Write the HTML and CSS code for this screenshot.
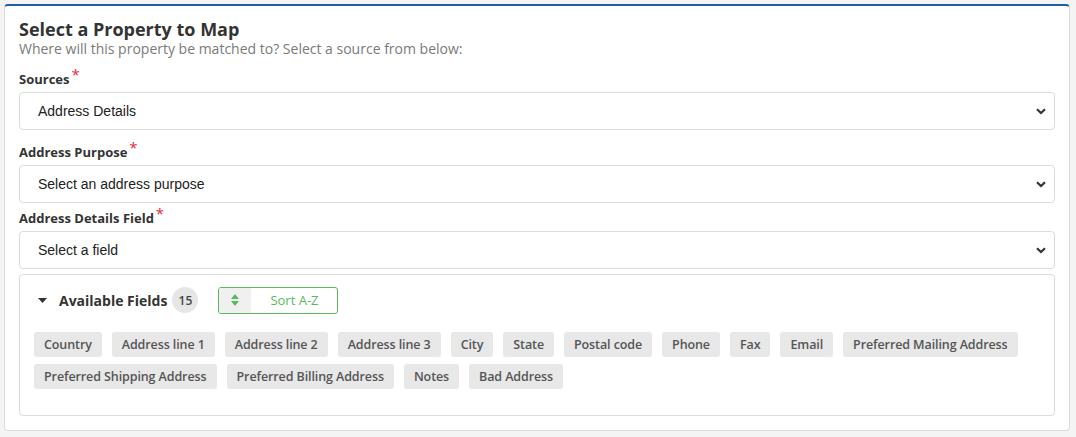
FILE: index.html
```html
<!DOCTYPE html>
<html>
<head>
<meta charset="utf-8">
<link rel="stylesheet" href="styles.css">
</head>
<body>
<div class="card">
  <h1 class="title">Select a Property to Map</h1>
  <p class="subtitle">Where will this property be matched to? Select a source from below:</p>

  <div class="field field-1">
    <label class="label">Sources<span class="req">*</span></label>
    <div class="select"><span>Address Details</span>
      <svg class="chev" width="10" height="7" viewBox="0 0 10 7"><path d="M1 1.2 L5 5 L9 1.2" fill="none" stroke="#333" stroke-width="2.2"/></svg>
    </div>
  </div>

  <div class="field field-2">
    <label class="label">Address Purpose<span class="req">*</span></label>
    <div class="select"><span>Select an address purpose</span>
      <svg class="chev" width="10" height="7" viewBox="0 0 10 7"><path d="M1 1.2 L5 5 L9 1.2" fill="none" stroke="#333" stroke-width="2.2"/></svg>
    </div>
  </div>

  <div class="field field-3">
    <label class="label">Address Details Field<span class="req">*</span></label>
    <div class="select"><span>Select a field</span>
      <svg class="chev" width="10" height="7" viewBox="0 0 10 7"><path d="M1 1.2 L5 5 L9 1.2" fill="none" stroke="#333" stroke-width="2.2"/></svg>
    </div>
  </div>

  <div class="panel">
    <div class="panel-head">
      <svg class="caret" width="9" height="5" viewBox="0 0 9 5"><path d="M0 0 H9 L4.5 5 Z" fill="#333"/></svg>
      <span class="panel-title">Available Fields</span>
      <span class="count">15</span>
      <div class="sort">
        <span class="sort-icon"><svg width="8" height="12" viewBox="0 0 8 12"><path d="M4 0 L8 5 H0 Z M0 7 H8 L4 12 Z" fill="#5cb85c"/></svg></span>
        <span class="sort-text">Sort A-Z</span>
      </div>
    </div>
    <div class="tags">
      <span class="tag">Country</span>
      <span class="tag">Address line 1</span>
      <span class="tag">Address line 2</span>
      <span class="tag">Address line 3</span>
      <span class="tag">City</span>
      <span class="tag">State</span>
      <span class="tag">Postal code</span>
      <span class="tag">Phone</span>
      <span class="tag">Fax</span>
      <span class="tag">Email</span>
      <span class="tag">Preferred Mailing Address</span>
      <span class="tag">Preferred Shipping Address</span>
      <span class="tag">Preferred Billing Address</span>
      <span class="tag">Notes</span>
      <span class="tag">Bad Address</span>
    </div>
  </div>
</div>
</body>
</html>
```

FILE: styles.css
```css
html, body {
  margin: 0;
  padding: 0;
  background: #f4f4f4;
}
body {
  padding: 4px 6px 6px 4px;
  font-family: "Open Sans", "Liberation Sans", sans-serif;
  color: #333;
}
.card {
  background: #fff;
  border: 1px solid #dcdcdc;
  border-top: 2px solid #1f5fa6;
  border-radius: 4px;
  padding: 12px 14px 14px 14px;
  box-sizing: border-box;
  height: 427px;
}
.title {
  margin: 0;
  font-size: 18px;
  font-weight: 700;
  line-height: 22px;
  color: #333;
}
.subtitle {
  margin: 0;
  font-size: 14px;
  line-height: 18px;
  color: #7a7a7a;
}
.field-1 {
  margin-top: 11px;
}
.field-2 {
  margin-top: 12px;
}
.field-3 {
  margin-top: 5px;
}
.label {
  display: block;
  font-size: 13px;
  font-weight: 700;
  line-height: 18px;
  margin-bottom: 4px;
  color: #333;
}
.req {
  color: #e8273a;
  font-size: 15px;
  position: relative;
  top: -4px;
  margin-left: 2px;
  font-weight: 400;
}
.select {
  display: flex;
  align-items: center;
  justify-content: space-between;
  height: 38px;
  box-sizing: border-box;
  border: 1px solid #dcdcdc;
  border-radius: 4px;
  padding: 0 8px 0 18px;
  font-family: "Liberation Sans", Arial, sans-serif;
  font-size: 14px;
  color: #222;
}
.panel {
  margin-top: 5px;
  border: 1px solid #dcdcdc;
  border-radius: 4px;
  height: 142px;
  box-sizing: border-box;
  padding: 11px 14px 0 14px;
}
.panel-head {
  display: flex;
  align-items: center;
  height: 28px;
}
.caret {
  margin-left: 4px;
  margin-right: 12px;
}
.panel-title {
  font-size: 14px;
  font-weight: 700;
  color: #333;
}
.count {
  display: inline-flex;
  align-items: center;
  justify-content: center;
  width: 26px;
  height: 26px;
  border-radius: 50%;
  background: #e6e6e6;
  font-size: 12px;
  font-weight: 600;
  color: #444;
  margin-left: 5px;
}
.sort {
  display: flex;
  margin-left: 20px;
  width: 120px;
  height: 27px;
  box-sizing: border-box;
  border: 1px solid #5cb85c;
  border-radius: 3px;
  overflow: hidden;
}
.sort-icon {
  width: 32px;
  background: #f0f0f0;
  display: flex;
  align-items: center;
  justify-content: center;
}
.sort-text {
  flex: 1;
  display: flex;
  align-items: center;
  justify-content: center;
  color: #5cb85c;
  font-size: 13px;
}
.tags {
  display: flex;
  flex-wrap: wrap;
  gap: 7px 10px;
  margin-top: 18px;
  width: 1000px;
}
.tag {
  background: #e8e8e8;
  border-radius: 3px;
  padding: 0 10px;
  height: 25px;
  line-height: 25px;
  font-size: 12.5px;
  font-weight: 600;
  color: #555;
  letter-spacing: -0.1px;
}
```
